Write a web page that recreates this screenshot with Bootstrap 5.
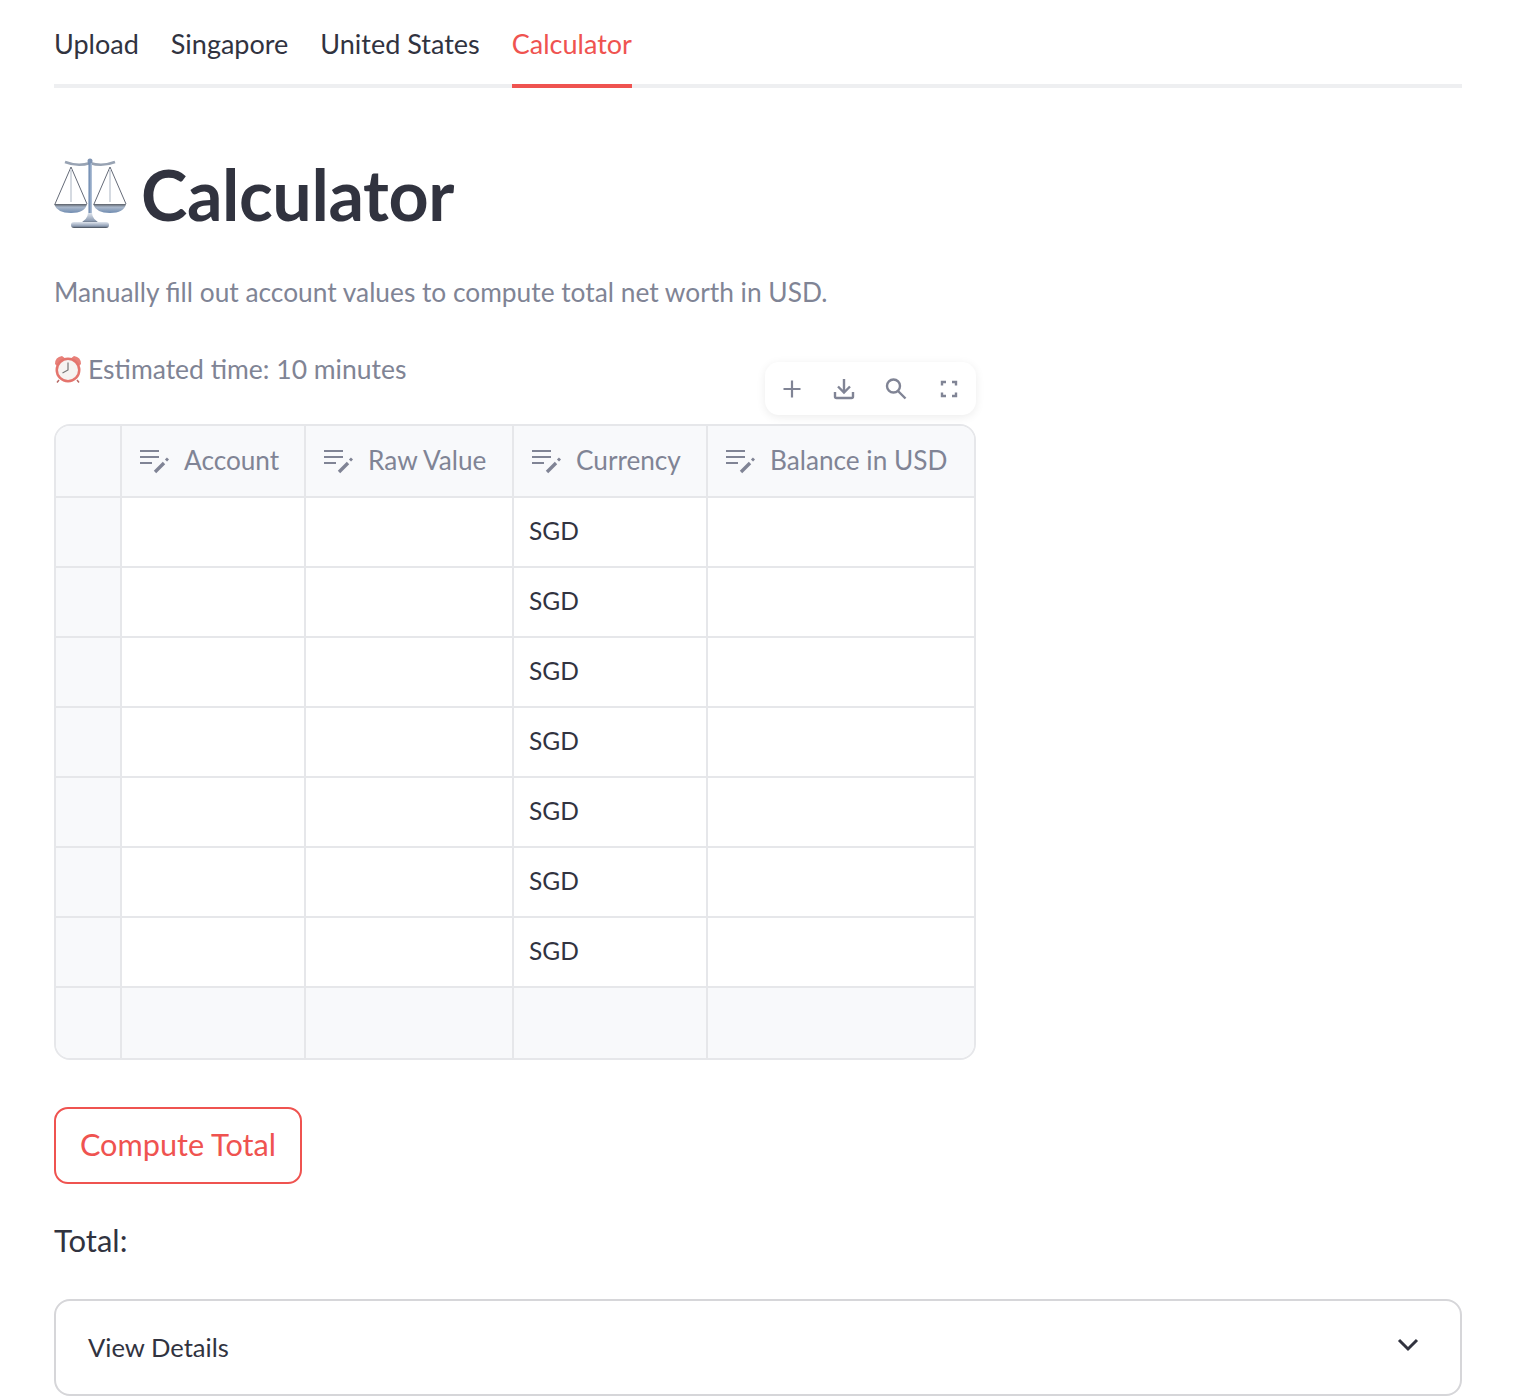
<!DOCTYPE html>
<html lang="en"><head><meta charset="utf-8"><title>Calculator</title>
<link rel="stylesheet" href="https://cdn.jsdelivr.net/npm/bootstrap@5.3.0/dist/css/bootstrap.min.css">
<style>
:root{--ink:#31333f;--muted:#808495;--line:#e6e7ea;--red:#ef5350;}
html,body{height:1398px;overflow:hidden}
body{font-family:Lato,"Noto Sans",sans-serif;color:var(--ink);background:#fff;font-size:27px;}
.shell{padding:0 52px 0 54px;}
.tabbar{height:88px;border-bottom:4px solid #eeeff1;gap:32px;margin:0;padding:0;list-style:none}
.tabitem{height:88px;line-height:88px;font-size:27px;color:var(--ink);text-decoration:none;display:block}
.tabitem.on{color:var(--red);border-bottom:4px solid var(--red)}
.tabitem.on:hover{color:var(--red)}
.pagetitle{font-size:70px;font-weight:700;line-height:90px;margin:61px 0 0;letter-spacing:-.4px;gap:14px}
.pagetitle svg{flex:none;margin-top:-2px}
.subline{color:var(--muted);line-height:40px;margin:0;font-size:26.300px}
.sub1{margin-top:33px}
.sub2{margin-top:37px;font-size:26.500px;gap:6px}
.tablewrap{width:922px;position:relative;margin-top:35px}
.toolbar{position:absolute;right:0;top:-62px;width:211px;height:53px;background:#fff;border-radius:14px;box-shadow:0 2px 10px rgba(0,0,0,.08);padding:0 9px}
.toolbar svg{width:36px;height:36px;display:block}
.grid{border:2px solid var(--line);border-radius:16px;overflow:hidden;display:grid;grid-template-columns:66px 184px 208px 194px 1fr;background:#fff}
.cell{height:70px;border-right:2px solid var(--line);border-bottom:2px solid var(--line);padding:0 15px 2px;display:flex;align-items:center;font-size:24.500px;color:var(--ink)}
.cell:nth-child(5n){border-right:0}
.hd{background:#f8f9fb;color:var(--muted);height:72px;gap:15px;padding:0 16px 0 17px;white-space:nowrap;font-size:26.200px}
.gut{background:#f8f9fb}
.tail{background:#f8f9fb;border-bottom:0;height:70px}
.hd svg{width:30px;height:30px;flex:none}
.cta{margin-top:47px;width:248px;height:77px;border:2px solid var(--red);border-radius:14px;color:var(--red);background:#fff;font-size:30.700px;padding:0;display:block}
.cta:hover{color:var(--red);border-color:var(--red);background:#fff}
.totalrow{font-size:31px;line-height:44px;margin:34px 0 0}
.details{margin-top:37px;height:97px;border:2px solid #d6d6d9;border-radius:16px;padding:0 40px 0 32px;font-size:25.600px}
.details svg{margin-bottom:5px}
</style></head>
<body>
<div class="shell">
<ul class="tabbar d-flex">
<li><a class="tabitem" href="#">Upload</a></li>
<li><a class="tabitem" href="#">Singapore</a></li>
<li><a class="tabitem" href="#">United States</a></li>
<li><a class="tabitem on" href="#">Calculator</a></li>
</ul>
<h1 class="pagetitle d-flex align-items-center">
<svg width="73" height="72" viewBox="0 0 73 72" fill="none">
<defs>
<linearGradient id="pan" x1="0" y1="0" x2="0" y2="1"><stop offset="0" stop-color="#5b6068"/><stop offset=".35" stop-color="#aab8cb"/><stop offset="1" stop-color="#6f8bb0"/></linearGradient>
<linearGradient id="foot" x1="0" y1="0" x2="0" y2="1"><stop offset="0" stop-color="#dfe5ee"/><stop offset=".7" stop-color="#8d9cb2"/><stop offset="1" stop-color="#3f4650"/></linearGradient>
<linearGradient id="post" x1="0" y1="0" x2="1" y2="0"><stop offset="0" stop-color="#5f7ea8"/><stop offset="1" stop-color="#b9c8dc"/></linearGradient>
</defs>
<path d="M11 5Q24 10 36 6Q48 10 61 5" stroke="#98a3b3" stroke-width="2.500"/>
<path d="M17 10 1 47M17 10 33 47M56 10 40 47M56 10 72 47" stroke="#656b78" stroke-width="1"/>
<path d="M17 12V45M56 12V45" stroke="#cbd1da" stroke-width="1.600"/>
<rect x="34.500" y="4" width="3.500" height="56" fill="url(#post)"/>
<circle cx="36" cy="4" r="2.500" fill="#7f94b3"/>
<path d="M0 47H33Q31 56 17 56T0 47ZM39 47H72Q70 56 56 56T39 47Z" fill="url(#pan)"/>
<path d="M34 56Q34 63 24 67H48Q38 63 38 56Z" fill="url(#foot)"/>
<rect x="17" y="65" width="38" height="6" rx="3" fill="url(#foot)"/>
</svg>
<span>Calculator</span></h1>
<p class="subline sub1">Manually fill out account values to compute total net worth in USD.</p>
<p class="subline sub2 d-flex align-items-center"><svg width="28" height="28" viewBox="0 0 28 28"><path d="M1 9Q1 2 8 1L12 4 3 11ZM27 9Q27 2 20 1L16 4 25 11Z" fill="#e88079"/><circle cx="14" cy="15" r="12.500" fill="#e4746d"/><circle cx="14" cy="15" r="10" fill="#f6f3f1"/><path d="M14 7.500V15L8.500 18" stroke="#777" stroke-width="1.200" fill="none"/><path d="M5 25 3 27.500M23 25 25 27.500" stroke="#b86a65" stroke-width="1.500"/></svg><span>Estimated time: 10 minutes</span></p>
<div class="tablewrap">
<div class="toolbar d-flex align-items-center justify-content-between">
<svg viewBox="0 0 36 36" fill="none" stroke="#808495" stroke-width="2.200"><path d="M18 9.500V26.500M9.500 18H26.500"/></svg>
<svg viewBox="0 0 36 36" fill="none" stroke="#808495" stroke-width="2.400"><path d="M18 8V21M12 15.500 18 21.500 24 15.500M9 21V25.500Q9 27 10.500 27H25.500Q27 27 27 25.500V21"/></svg>
<svg viewBox="0 0 36 36" fill="none" stroke="#808495" stroke-width="2.400"><circle cx="14.500" cy="15" r="6.500"/><path d="M19 20 26.500 27.500"/></svg>
<svg viewBox="0 0 36 36" fill="none" stroke="#808495" stroke-width="2.400"><path d="M11 14.500V11H15M21 11H25V14.500M25 21.500V25H21M15 25H11V21.500"/></svg>
</div>
<div class="grid">
<div class="cell hd"></div>
<div class="cell hd"><svg viewBox="0 0 30 30" fill="none" stroke="#808495" stroke-width="2"><path d="M1 5H20M1 11H20M1 17H13"/><path d="M16 26 25 17" stroke-width="3.400"/><path d="M27 14.500 29 12.500" stroke-width="3"/></svg><span>Account</span></div>
<div class="cell hd"><svg viewBox="0 0 30 30" fill="none" stroke="#808495" stroke-width="2"><path d="M1 5H20M1 11H20M1 17H13"/><path d="M16 26 25 17" stroke-width="3.400"/><path d="M27 14.500 29 12.500" stroke-width="3"/></svg><span>Raw Value</span></div>
<div class="cell hd"><svg viewBox="0 0 30 30" fill="none" stroke="#808495" stroke-width="2"><path d="M1 5H20M1 11H20M1 17H13"/><path d="M16 26 25 17" stroke-width="3.400"/><path d="M27 14.500 29 12.500" stroke-width="3"/></svg><span>Currency</span></div>
<div class="cell hd"><svg viewBox="0 0 30 30" fill="none" stroke="#808495" stroke-width="2"><path d="M1 5H20M1 11H20M1 17H13"/><path d="M16 26 25 17" stroke-width="3.400"/><path d="M27 14.500 29 12.500" stroke-width="3"/></svg><span>Balance in USD</span></div>
<div class="cell gut"></div><div class="cell"></div><div class="cell"></div><div class="cell">SGD</div><div class="cell"></div>
<div class="cell gut"></div><div class="cell"></div><div class="cell"></div><div class="cell">SGD</div><div class="cell"></div>
<div class="cell gut"></div><div class="cell"></div><div class="cell"></div><div class="cell">SGD</div><div class="cell"></div>
<div class="cell gut"></div><div class="cell"></div><div class="cell"></div><div class="cell">SGD</div><div class="cell"></div>
<div class="cell gut"></div><div class="cell"></div><div class="cell"></div><div class="cell">SGD</div><div class="cell"></div>
<div class="cell gut"></div><div class="cell"></div><div class="cell"></div><div class="cell">SGD</div><div class="cell"></div>
<div class="cell gut"></div><div class="cell"></div><div class="cell"></div><div class="cell">SGD</div><div class="cell"></div>
<div class="cell tail"></div><div class="cell tail"></div><div class="cell tail"></div><div class="cell tail"></div><div class="cell tail"></div>
</div></div>
<button class="btn cta" type="button">Compute Total</button>
<p class="totalrow">Total:</p>
<div class="details d-flex align-items-center justify-content-between"><span>View Details</span><svg width="24" height="24" viewBox="0 0 24 24" fill="none" stroke="#31333f" stroke-width="3"><path d="M3 7 12 16 21 7"/></svg></div>
</div>
<script src="https://cdn.jsdelivr.net/npm/bootstrap@5.3.0/dist/js/bootstrap.bundle.min.js"></script>
</body></html>
